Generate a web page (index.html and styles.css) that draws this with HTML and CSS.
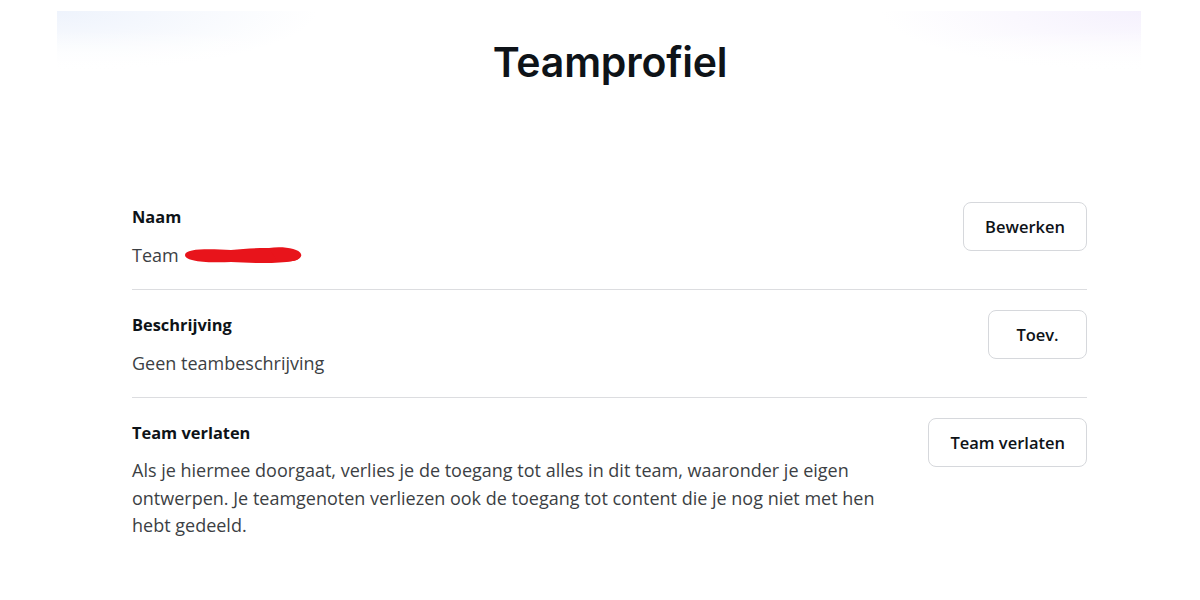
FILE: index.html
```html
<!DOCTYPE html>
<html lang="nl">
<head>
<meta charset="utf-8">
<title>Teamprofiel</title>
<link rel="stylesheet" href="styles.css">
</head>
<body>
<div class="page">
  <header class="hero">
    <h1 class="title">Teamprofiel</h1>
  </header>
  <main class="settings">
    <section class="row">
      <div class="info">
        <div class="label">Naam</div>
        <div class="value">Team <span class="redact"><svg width="124" height="22" viewBox="0 0 124 22"><path d="M4 11 C4 4 30 5 50 6 C70 4 95 3 110 6 C122 7 122 16 112 17 C96 20 70 19 50 18 C30 19 4 18 4 11 Z" fill="#e8141b"/><path d="M88 4 C100 2 118 4 120 10 C122 16 108 19 96 17 Z" fill="#e8141b"/></svg></span></div>
      </div>
      <button class="btn">Bewerken</button>
    </section>
    <section class="row">
      <div class="info">
        <div class="label">Beschrijving</div>
        <div class="value">Geen teambeschrijving</div>
      </div>
      <button class="btn">Toev.</button>
    </section>
    <section class="row last">
      <div class="info">
        <div class="label">Team verlaten</div>
        <p class="value para">Als je hiermee doorgaat, verlies je de toegang tot alles in dit team, waaronder je eigen ontwerpen. Je teamgenoten verliezen ook de toegang tot content die je nog niet met hen hebt gedeeld.</p>
      </div>
      <button class="btn">Team verlaten</button>
    </section>
  </main>
</div>
</body>
</html>
```

FILE: styles.css
```css
* { box-sizing: border-box; }
html, body { margin: 0; padding: 0; background: #ffffff; }
body {
  font-family: "Open Sans", "Noto Sans", sans-serif;
  color: #0e1318;
  width: 1200px;
  height: 600px;
  overflow: hidden;
}
.page {
  padding: 11px 59px 0 57px;
}
.hero {
  height: 100px;
  padding-top: 27px;
  padding-left: 22px;
  background:
    linear-gradient(180deg, rgba(255,255,255,0) 0%, rgba(255,255,255,0) 20%, #ffffff 60%),
    radial-gradient(ellipse 260px 60px at 0% 0%, #eef3fc 0%, rgba(238,243,252,0) 100%),
    radial-gradient(ellipse 260px 60px at 100% 0%, #f5f1fd 0%, rgba(245,241,253,0) 100%),
    #ffffff;
  text-align: center;
}
.title {
  margin: 0;
  font-family: Inter, "Noto Sans", sans-serif;
  font-weight: 600;
  font-size: 41px;
  line-height: 48px;
  letter-spacing: -0.2px;
  color: #0e1318;
}
.settings {
  margin: 71px 0 0 75px;
  width: 955px;
}
.row {
  display: flex;
  justify-content: space-between;
  align-items: flex-start;
  gap: 40px;
  padding: 20px 0 22px;
  border-bottom: 1px solid #dcdde0;
}
.row.last { border-bottom: none; }
.info { display: flex; flex-direction: column; gap: 14px; }
.label {
  font-weight: 700;
  font-size: 16.4px;
  line-height: 24px;
  color: #0e1318;
  margin-top: 3px;
}
.value {
  font-size: 18px;
  line-height: 24px;
  color: #3c3f44;
  display: flex;
  align-items: center;
  gap: 2px;
}
.para {
  display: block;
  margin: 0;
  max-width: 770px;
  line-height: 27.5px;
  margin-top: -2px;
}
.redact { display: inline-flex; margin-left: 0; }
.btn {
  flex: none;
  height: 49px;
  min-width: 99px;
  padding: 0 21px;
  background: #ffffff;
  border: 1px solid #d6d8dc;
  border-radius: 8px;
  font-family: "Open Sans", "Noto Sans", sans-serif;
  font-weight: 600;
  font-size: 16.5px;
  color: #0e1318;
  cursor: pointer;
}
```
